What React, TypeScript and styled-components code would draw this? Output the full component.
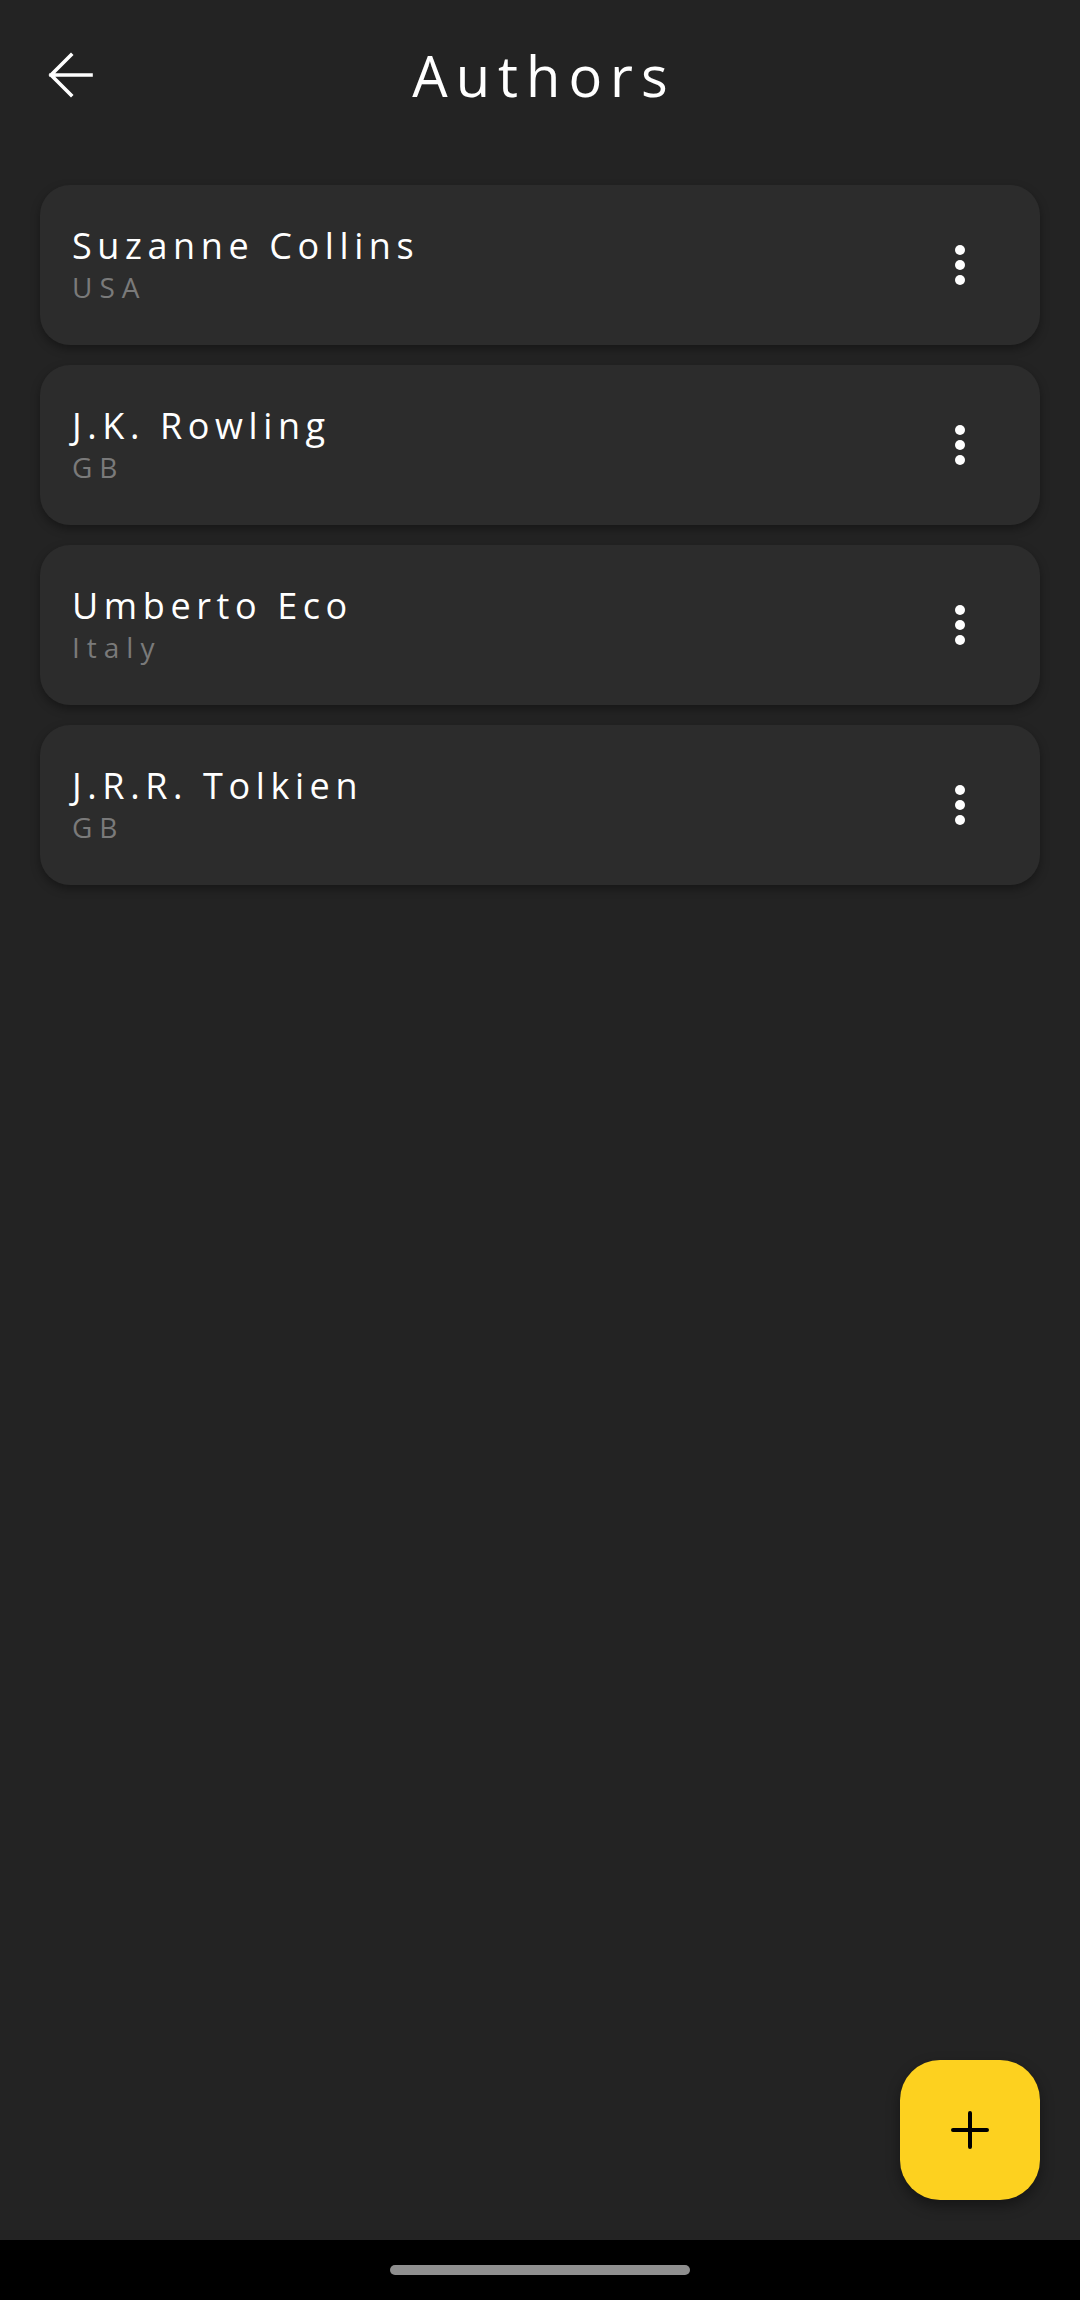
import React from "react";
import styled, { createGlobalStyle } from "styled-components";

const GlobalStyle = createGlobalStyle`
  html, body {
    margin: 0;
    padding: 0;
    background: #232323;
  }
  body {
    font-family: "Open Sans", "Noto Sans", sans-serif;
    color: #ffffff;
  }
  * { box-sizing: border-box; }
`;

const Screen = styled.div`
  position: relative;
  width: 1080px;
  height: 2300px;
  display: flex;
  flex-direction: column;
  background: #232323;
  overflow: hidden;
`;

const Header = styled.header`
  height: 150px;
  display: grid;
  grid-template-columns: 1fr auto 1fr;
  align-items: center;
`;

const BackButton = styled.button`
  justify-self: start;
  margin-left: 40px;
  width: 60px;
  height: 60px;
  padding: 0;
  border: none;
  background: transparent;
  display: flex;
  align-items: center;
  justify-content: center;
  cursor: pointer;
`;

const Title = styled.h1`
  margin: 0 -8px 0 0;
  font-size: 56px;
  font-weight: 500;
  letter-spacing: 8px;
  line-height: 1;
  color: #ffffff;
`;

const List = styled.main`
  flex: 1;
  display: flex;
  flex-direction: column;
  gap: 20px;
  padding: 35px 40px 0;
`;

const Card = styled.div`
  height: 160px;
  border-radius: 30px;
  background: #2c2c2c;
  box-shadow: 0 4px 10px rgba(0, 0, 0, 0.35);
  display: flex;
  align-items: center;
  justify-content: space-between;
  padding: 0 50px 0 32px;
`;

const Info = styled.div`
  display: flex;
  flex-direction: column;
  margin-top: 2px;
`;

const Name = styled.div`
  font-size: 36px;
  line-height: 42px;
  font-weight: 500;
  letter-spacing: 5.6px;
  color: #ffffff;
`;

const Country = styled.div`
  font-size: 28px;
  line-height: 40px;
  font-weight: 500;
  letter-spacing: 7px;
  color: #7a7a7a;
`;

const MenuButton = styled.button`
  width: 60px;
  height: 60px;
  padding: 0;
  border: none;
  background: transparent;
  display: flex;
  align-items: center;
  justify-content: center;
  cursor: pointer;
`;

const Fab = styled.button`
  position: absolute;
  right: 40px;
  bottom: 100px;
  width: 140px;
  height: 140px;
  border-radius: 40px;
  border: none;
  background: #fdd11f;
  box-shadow: 0 6px 14px rgba(0, 0, 0, 0.4);
  display: flex;
  align-items: center;
  justify-content: center;
  cursor: pointer;
`;

const NavBar = styled.div`
  height: 60px;
  background: #000000;
  display: flex;
  align-items: center;
  justify-content: center;
`;

const Handle = styled.div`
  width: 300px;
  height: 10px;
  border-radius: 5px;
  background: #8f8f8f;
`;

const authors = [
  { name: "Suzanne Collins", country: "USA" },
  { name: "J.K. Rowling", country: "GB" },
  { name: "Umberto Eco", country: "Italy" },
  { name: "J.R.R. Tolkien", country: "GB" },
];

const BackIcon = () => (
  <svg width="60" height="60" viewBox="0 0 60 60" fill="none">
    <path
      d="M51 30H11M31 10L11 30L31 50"
      stroke="#ffffff"
      strokeWidth="3.6"
      strokeLinecap="square"
      strokeLinejoin="miter"
    />
  </svg>
);

const MoreIcon = () => (
  <svg width="60" height="60" viewBox="0 0 24 24" fill="#ffffff">
    <circle cx="12" cy="6" r="2" />
    <circle cx="12" cy="12" r="2" />
    <circle cx="12" cy="18" r="2" />
  </svg>
);

const PlusIcon = () => (
  <svg width="40" height="40" viewBox="0 0 40 40" fill="none">
    <path d="M20 3V37M3 20H37" stroke="#000000" strokeWidth="4" strokeLinecap="round" />
  </svg>
);

export default function App() {
  return (
    <>
      <GlobalStyle />
      <Screen>
        <Header>
          <BackButton aria-label="Back">
            <BackIcon />
          </BackButton>
          <Title>Authors</Title>
          <div />
        </Header>
        <List>
          {authors.map((a) => (
            <Card key={a.name}>
              <Info>
                <Name>{a.name}</Name>
                <Country>{a.country}</Country>
              </Info>
              <MenuButton aria-label="More">
                <MoreIcon />
              </MenuButton>
            </Card>
          ))}
        </List>
        <Fab aria-label="Add author">
          <PlusIcon />
        </Fab>
        <NavBar>
          <Handle />
        </NavBar>
      </Screen>
    </>
  );
}
